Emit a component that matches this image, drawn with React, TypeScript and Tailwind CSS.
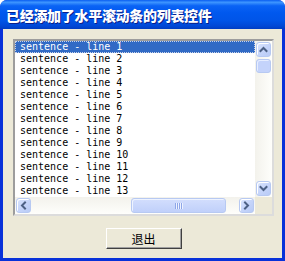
import React from "react";

const lines = Array.from({ length: 13 }, (_, i) => `sentence - line ${i + 1}`);

function Arrow({ dir }: { dir: "up" | "down" | "left" | "right" }) {
  const d = {
    up: "M1.5 6 L4.5 3 L7.5 6",
    down: "M1.5 3 L4.5 6 L7.5 3",
    left: "M6 1.5 L3 4.5 L6 7.5",
    right: "M3 1.5 L6 4.5 L3 7.5",
  }[dir];
  return (
    <svg width={9} height={9} viewBox="0 0 9 9" fill="none">
      <path d={d} stroke="#4d6185" strokeWidth={2} strokeLinecap="square" />
    </svg>
  );
}

function ScrollButton({ dir }: { dir: "up" | "down" | "left" | "right" }) {
  return (
    <div className="w-[17px] h-[17px] shrink-0 p-px">
      <div className="w-full h-full rounded-[3px] border border-[#b7c9f2] bg-[linear-gradient(135deg,#dbe5fd_0%,#c6d5fa_50%,#b8cbf6_100%)] flex items-center justify-center shadow-[inset_1px_1px_0_#ffffff]">
        <Arrow dir={dir} />
      </div>
    </div>
  );
}

export default function App() {
  return (
    <div className="w-[285px] h-[261px] flex flex-col bg-[#0831d9] rounded-t-[7px] overflow-hidden font-['Liberation_Sans','Noto_Sans_CJK_SC',sans-serif]">
      {/* title bar */}
      <div className="h-[29px] shrink-0 flex items-center px-[6px] bg-[linear-gradient(to_bottom,#0a5ef0_0%,#3d95ff_8%,#0a63f5_20%,#0058ee_45%,#0055e8_70%,#0148d5_90%,#003dc2_100%)]">
        <span className="text-white text-[14px] font-black leading-none tracking-[-0.3px] [text-shadow:1px_1px_#0b1f8a] font-['Noto_Sans_CJK_SC',sans-serif]">
          已经添加了水平滚动条的列表控件
        </span>
      </div>

      {/* body */}
      <div className="flex-1 mx-[3px] mb-[3px] bg-[#ece9d8] pt-[10px] pl-[10px] pr-[8px] flex flex-col">
        <div className="w-[261px] h-[177px] border-2 border-t-[#9d9d9d] border-l-[#9d9d9d] border-b-[#dcdcdc] border-r-[#dcdcdc] bg-white flex flex-col">
          <div className="flex h-[156px]">
            <div className="w-[240px] flex flex-col font-['DejaVu_Sans_Mono',monospace] text-[10px] leading-[12px] overflow-hidden">
              {lines.map((l, i) =>
                i === 0 ? (
                  <div key={l} className="h-[12px] bg-[#316ac5] text-white pl-[4px] border border-dotted border-[#c8d2e8] whitespace-pre leading-[10px]">
                    {l}
                  </div>
                ) : (
                  <div key={l} className="h-[12px] text-black pl-[5px] whitespace-pre">
                    {l}
                  </div>
                )
              )}
            </div>
            {/* vertical scrollbar */}
            <div className="w-[17px] flex flex-col bg-[linear-gradient(to_right,#f3f2ec,#fefefb)]">
              <ScrollButton dir="up" />
              <div className="w-[17px] h-[16px] p-px">
                <div className="w-full h-full rounded-[3px] border border-[#b7c9f2] bg-[#c4d3fb] shadow-[inset_1px_1px_0_#e6edff]" />
              </div>
              <div className="flex-1" />
              <ScrollButton dir="down" />
            </div>
          </div>
          <div className="flex h-[17px]">
            {/* horizontal scrollbar */}
            <div className="w-[240px] flex bg-[linear-gradient(to_bottom,#f3f2ec,#fefefb)]">
              <ScrollButton dir="left" />
              <div className="w-[98px]" />
              <div className="w-[97px] h-[17px] p-px">
                <div className="w-full h-full rounded-[3px] border border-[#b7c9f2] bg-[linear-gradient(to_bottom,#d3defd,#c0d0fa)] shadow-[inset_1px_1px_0_#eef3ff] flex items-center justify-center gap-px">
                  {[0, 1, 2, 3].map((k) => (
                    <div key={k} className="w-px h-[6px] bg-[#8ea6e8] shadow-[1px_0_0_#eef3ff]" />
                  ))}
                </div>
              </div>
              <div className="flex-1" />
              <ScrollButton dir="right" />
            </div>
            <div className="w-[17px] bg-[#ece9d8]" />
          </div>
        </div>

        <div className="flex justify-center mt-[12px]">
          <button className="w-[76px] h-[21px] bg-[#ece9d8] border border-t-white border-l-white border-b-[#404040] border-r-[#404040] shadow-[inset_-1px_-1px_0_#a0a0a0] text-[12px] leading-none text-black font-['Noto_Sans_CJK_SC',sans-serif] flex items-center justify-center">
            退出
          </button>
        </div>
      </div>
    </div>
  );
}
